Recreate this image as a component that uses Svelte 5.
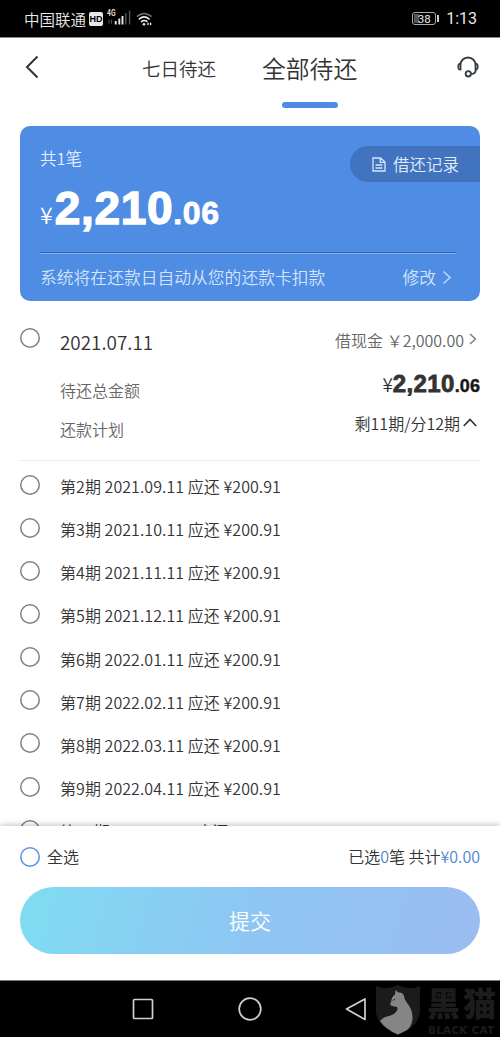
<script lang="ts">
  type Period = { no: number; date: string; amount: string };

  const periods: Period[] = [
    { no: 2, date: "2021.09.11", amount: "200.91" },
    { no: 3, date: "2021.10.11", amount: "200.91" },
    { no: 4, date: "2021.11.11", amount: "200.91" },
    { no: 5, date: "2021.12.11", amount: "200.91" },
    { no: 6, date: "2022.01.11", amount: "200.91" },
    { no: 7, date: "2022.02.11", amount: "200.91" },
    { no: 8, date: "2022.03.11", amount: "200.91" },
    { no: 9, date: "2022.04.11", amount: "200.91" },
    { no: 10, date: "2022.05.11", amount: "200.91" },
  ];
</script>

<div class="page">
  <div class="statusbar">
    <span class="carrier">中国联通</span>
    <span class="hd">HD</span>
    <svg class="signal" width="24" height="16" viewBox="0 0 24 16">
      <text x="0" y="7" font-size="9" font-weight="700" textLength="8.5" lengthAdjust="spacingAndGlyphs" fill="#ddd">4G</text>
      <path d="M2 10.500v4M4.500 10.500v4" stroke="#555" stroke-width="1" />
      <path d="M8.700 12v3.500M12.300 9.500v6M15.500 7v8.500" stroke="#e8e8e8" stroke-width="1.900" />
      <path d="M18.800 4v11.500M22.600 1.500v14" stroke="#555" stroke-width="1.400" />
    </svg>
    <svg class="wifi" width="17" height="14" viewBox="0 0 17 14" fill="none" stroke-linecap="round">
      <path d="M1.500 4.200Q8 -1.200 15 4.200" stroke="#777" stroke-width="1.500" />
      <path d="M3.400 6.900Q8 3 13 6.900" stroke="#eee" stroke-width="1.700" />
      <path d="M5.500 9.600Q8 7.600 10.800 9.300" stroke="#eee" stroke-width="1.600" />
      <circle cx="8" cy="12.200" r="1.300" fill="#eee" />
      <path d="M12 11.200v1.400M14.600 11.200v1.400" stroke="#eee" stroke-width="1.400" />
    </svg>
    <span class="battery"><span class="level">38</span></span>
    <span class="nub"></span>
    <span class="clock">1:13</span>
  </div>

  <header>
    <svg class="back" width="14" height="24" viewBox="0 0 14 24" fill="none" stroke="#333" stroke-width="2">
      <path d="M12.500 1.500L2 12l10.500 10.500" />
    </svg>
    <span class="tab">七日待还</span>
    <span class="tab active">全部待还</span>
    <svg class="service" width="22" height="22" viewBox="0 0 22 22" fill="none" stroke="#333c40" stroke-width="1.800">
      <path d="M3.300 14V9.200a7.700 7.700 0 0 1 15.400 0V14c0 2.400-1.600 3.800-4.400 4.200" />
      <path d="M3.600 7.500C1.600 7.700 1 9 1 10.700s.7 3 2.600 3.200zM18.400 7.500c2 .2 2.600 1.500 2.600 3.200s-.7 3-2.600 3.200z" fill="#8b9093" stroke-width="1.300" />
      <circle cx="11.300" cy="17.800" r="2.700" fill="#fff" />
    </svg>
  </header>

  <section class="card">
    <div class="top">
      <span class="count">共1笔</span>
      <button class="record">
        <svg width="14" height="15" viewBox="0 0 14 15" fill="none" stroke="#d5e5fb" stroke-width="1.300">
          <path d="M1 1h7.500L13 5v9H1zM8.300 1v4.300H13M3.500 8h7M3.500 11h7" />
        </svg>
        借还记录
      </button>
    </div>
    <div class="total"><span class="yen">¥</span><b>2,210</b><b class="cents">.06</b></div>
    <div class="notice">
      <span>系统将在还款日自动从您的还款卡扣款</span>
      <span class="edit">修改</span>
      <svg width="10" height="15" viewBox="0 0 10 15" fill="none" stroke="#b9d3f8" stroke-width="1.700">
        <path d="M1.500 1.500l6.500 6-6.500 6" />
      </svg>
    </div>
  </section>

  <main>
    <div class="loan">
      <span class="radio"></span>
      <div class="info">
        <div class="line first">
          <span class="date">2021.07.11</span>
          <span class="product">借现金 ￥2,000.00</span>
          <svg class="more" width="8" height="12" viewBox="0 0 8 12" fill="none" stroke="#777" stroke-width="1.400">
            <path d="M1 1l5.500 5L1 11" />
          </svg>
        </div>
        <div class="line second">
          <span class="label">待还总金额</span>
          <span class="sum"><span class="yen">¥</span><b>2,210</b><b class="cents">.06</b></span>
        </div>
        <div class="line third">
          <span class="label">还款计划</span>
          <span class="plan">剩11期/分12期</span>
          <svg class="fold" width="14" height="9" viewBox="0 0 14 9" fill="none" stroke="#333" stroke-width="1.700">
            <path d="M.8 8L7 1.500 13.200 8" />
          </svg>
        </div>
      </div>
    </div>
    <ul>
      {#each periods as p}
        <li>
          <span class="radio"></span>
          <span class="period">第{p.no}期 {p.date} 应还 ¥{p.amount}</span>
        </li>
      {/each}
    </ul>
  </main>

  <footer>
    <div class="summary">
      <span class="radio blue"></span>
      <span class="all">全选</span>
      <span class="picked">已选<em>0</em>笔 共计<em>¥0.00</em></span>
    </div>
    <button class="submit">提交</button>
  </footer>

  <nav>
    <svg width="240" height="26" viewBox="0 0 240 26" fill="none" stroke="#d0d0d0" stroke-width="1.700" stroke-linejoin="round">
      <rect x="3.500" y="3.500" width="19" height="19" rx="1" />
      <circle cx="120" cy="13" r="10.800" />
      <path d="M235 3v20.500L216.500 13z" />
    </svg>
    <div class="brand">
      <svg width="46" height="50" viewBox="0 0 46 50">
        <path d="M1 1Q11 6 23 0Q35 6 45 1V27Q43 42 23 50Q3 42 1 27z" fill="#1b1b1b" />
        <path
          d="M20.500 5L23.500 7.500Q28 7 29 11Q29 14 31.500 17Q38 25 37.500 34Q36.500 42 32 45L23 49.500Q10 44 5 36Q8 32 14 31Q20 29.500 22 25.500Q23 23 21.500 21.500Q19 22 16 20.500Q14.500 19.500 16 17Q16.500 11.500 20 9.500z"
          fill="#858585"
        />
        <path d="M17.500 15.500l2.500-1.200" stroke="#333" stroke-width="1" />
      </svg>
      <div class="words">
        <span class="zh">黑猫</span>
        <span class="en">BLACK CAT</span>
      </div>
    </div>
  </nav>
</div>

<style>
  :global(body) {
    background: #fff;
  }
  .page {
    width: 500px;
    height: 1037px;
    display: flex;
    flex-direction: column;
    overflow: hidden;
    background: #fff;
    color: #333;
    font-family: "Noto Sans CJK SC", sans-serif;
    font-size: 16px;
    font-weight: 350;
    line-height: 24px;
  }
  button {
    border: none;
    padding: 0;
    font-family: inherit;
    font-weight: inherit;
  }
  .statusbar {
    height: 38px;
    flex-shrink: 0;
    display: flex;
    align-items: center;
    padding: 0 23px 0 24px;
    background: #000;
    border-bottom: 1px solid #888;
    box-sizing: border-box;
    color: #e8e8e8;
  }
  .carrier {
    margin-top: 1px;
    font-size: 15.5px;
    white-space: nowrap;
  }
  .hd {
    width: 14px;
    height: 14px;
    margin-left: 3px;
    border-radius: 2px;
    background: #e8e8e8;
    color: #000;
    font: 700 9px/14px "Liberation Sans", sans-serif;
    text-align: center;
  }
  .signal {
    margin: -3px 0 0 4px;
    font-family: Roboto, sans-serif;
  }
  .wifi {
    margin: 1px 0 0 5px;
  }
  .battery {
    width: 24px;
    height: 13px;
    margin-left: auto;
    border: 1px solid #aaa;
    border-radius: 3px;
    padding: 1px;
    box-sizing: border-box;
  }
  .level {
    display: block;
    height: 9px;
    background: linear-gradient(90deg, #555 25%, transparent 25%);
    font: 11.5px/10px Roboto, sans-serif;
    text-align: center;
    color: #eee;
  }
  .nub {
    width: 2px;
    height: 7px;
    margin-left: 1px;
    background: #ccc;
  }
  .clock {
    margin: 1px 0 0 7px;
    font: 16px/20px Roboto, sans-serif;
  }
  header {
    height: 88px;
    flex-shrink: 0;
    display: flex;
    align-items: flex-start;
    padding: 0 22px 0 25px;
    box-sizing: border-box;
  }
  .back {
    margin-top: 17px;
  }
  .tab {
    margin: 14px 0 0 103px;
    font-size: 18.500px;
    line-height: 32px;
  }
  .tab.active {
    display: flex;
    flex-direction: column;
    align-items: center;
    margin-left: 46px;
    font-size: 23.800px;
  }
  .tab.active::after {
    content: "";
    width: 56px;
    height: 6px;
    margin-top: 18px;
    border-radius: 3px;
    background: #4f8ce2;
  }
  .service {
    margin: 18px -1px 0 auto;
  }
  .card {
    height: 175px;
    flex-shrink: 0;
    margin: 0 20px;
    padding: 20px 0 0 20px;
    box-sizing: border-box;
    border-radius: 10px;
    background: #4f8ce4;
    color: #fff;
  }
  .top {
    display: flex;
    justify-content: space-between;
    height: 36px;
  }
  .count {
    font-size: 16.500px;
    color: #e4effd;
  }
  .record {
    width: 130px;
    height: 36px;
    display: flex;
    align-items: center;
    gap: 7px;
    padding-left: 22px;
    border-radius: 18px 0 0 18px;
    background: #4173bf;
    color: #e0ecfc;
    font-size: 16.500px;
    white-space: nowrap;
  }
  .total {
    height: 70px;
    display: flex;
    align-items: baseline;
    line-height: 52px;
  }
  .total .yen {
    margin-right: 2px;
    font-size: 23px;
  }
  .total b {
    font-family: "Liberation Sans", sans-serif;
    font-size: 46px;
    letter-spacing: 0.7px;
    -webkit-text-stroke: 1.4px #fff;
  }
  .total .cents {
    font-size: 32px;
    -webkit-text-stroke-width: 0.8px;
  }
  .notice {
    display: flex;
    align-items: center;
    height: 48px;
    margin-right: 24px;
    border-top: 1px solid #3565ae;
    box-shadow: inset 0 1px #82b0f0;
    font-size: 16.800px;
    color: #d3e4fb;
    white-space: nowrap;
  }
  .edit {
    margin-left: auto;
  }
  .notice svg {
    margin: 0 4px 0 6px;
  }
  main {
    flex: 1;
    min-height: 0;
    overflow: hidden;
    padding: 0 20px;
  }
  .radio {
    width: 20px;
    height: 20px;
    flex-shrink: 0;
    box-shadow: inset 0 0 0 1.500px #808080;
    border-radius: 50%;
  }
  .loan {
    height: 160px;
    display: flex;
    box-sizing: border-box;
    border-bottom: 1px solid #ececec;
  }
  .loan .radio {
    margin-top: 27px;
  }
  .info {
    flex: 1;
    margin-left: 20px;
  }
  .line {
    display: flex;
    align-items: center;
  }
  .first {
    height: 46px;
    padding-top: 18px;
  }
  .date {
    font-size: 18.900px;
  }
  .product {
    margin-left: auto;
    margin-top: -5px;
    color: #666;
  }
  .more {
    margin: -6px 3px 0 5px;
  }
  .label {
    color: #666;
  }
  .second {
    height: 50px;
  }
  .sum {
    display: flex;
    align-items: baseline;
    margin: -11px 0 0 auto;
  }
  .sum .yen {
    font-size: 19px;
  }
  .sum b {
    font-family: "Liberation Sans", sans-serif;
    font-size: 24px;
    letter-spacing: 0.35px;
    -webkit-text-stroke: 0.8px #333;
  }
  .sum .cents {
    font-size: 18px;
    letter-spacing: 0.1px;
    color: #111;
    -webkit-text-stroke-width: 0.5px;
  }
  .third {
    height: 27px;
  }
  .plan {
    margin: -11px 0 0 auto;
  }
  .fold {
    margin: -13px 3px 0 3px;
  }
  ul {
    list-style: none;
    margin: 0;
    padding: 4px 0 0;
  }
  li {
    display: flex;
    align-items: center;
    gap: 20px;
    height: 43.150px;
    white-space: nowrap;
  }
  li .radio {
    margin-bottom: 4px;
  }
  .period {
    margin-bottom: 1px;
    letter-spacing: 0.060px;
  }
  footer {
    height: 154px;
    flex-shrink: 0;
    padding: 18px 20px 0;
    box-sizing: border-box;
    background: #fff;
    box-shadow: 0 -1px 6px rgba(0, 0, 0, 0.25);
    z-index: 1;
  }
  .summary {
    display: flex;
    align-items: center;
  }
  .radio.blue {
    margin-top: 1px;
    box-shadow: inset 0 0 0 1.500px #5b92e0;
  }
  .all {
    margin-left: 7px;
  }
  .picked {
    margin-left: auto;
  }
  em {
    font-style: normal;
    color: #4f86cf;
  }
  .submit {
    display: block;
    width: 460px;
    height: 67px;
    margin-top: 19px;
    padding-bottom: 2px;
    border-radius: 34px;
    background: linear-gradient(105deg, #7fdcf2 0%, #8ec6f3 50%, #9abcf1 100%);
    color: #fff;
    font-size: 21px;
  }
  nav {
    position: relative;
    height: 57px;
    flex-shrink: 0;
    display: flex;
    justify-content: center;
    align-items: center;
    background: #000;
    border-top: 1px solid #777;
    box-sizing: border-box;
    z-index: 2;
  }
  /* badge laid over the navigation bar */
  .brand {
    position: absolute;
    left: 375px;
    top: 4px;
    display: flex;
    gap: 6px;
  }
  .words {
    display: flex;
    flex-direction: column;
    color: #1c1c1c;
    white-space: nowrap;
  }
  .zh {
    font-size: 33px;
    font-weight: 900;
    line-height: 34px;
    letter-spacing: 3px;
  }
  .en {
    margin: 5px 0 0 1px;
    font: 700 10.500px/12px "DejaVu Sans", sans-serif;
    letter-spacing: 0.2px;
  }
</style>
